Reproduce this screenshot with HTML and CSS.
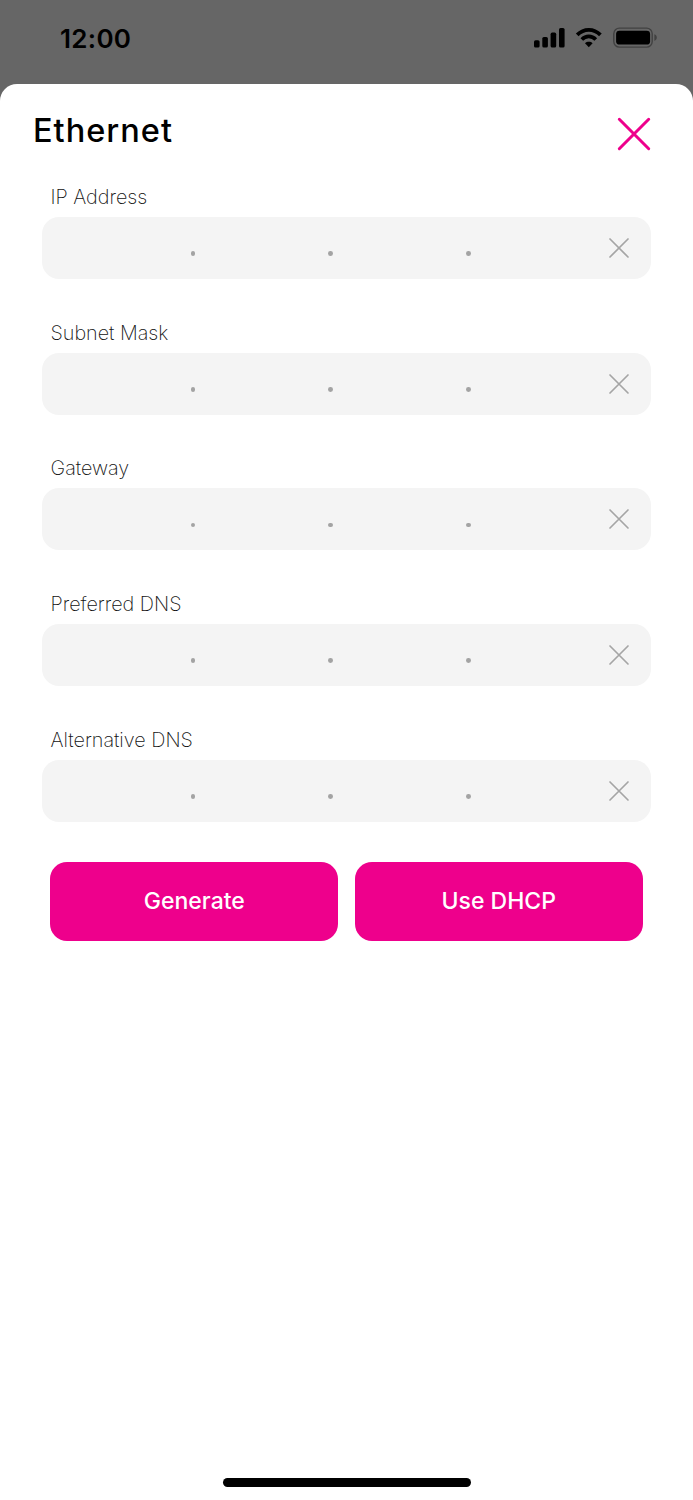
FILE: index.html
```
<!DOCTYPE html>
<html lang="en">
<head>
<meta charset="utf-8">
<title>Ethernet</title>
<link rel="stylesheet" href="styles.css">
</head>
<body>
<div class="screen">
  <header class="status">
    <span class="time">12:00</span>
    <svg class="signals" width="126" height="24" viewBox="0 0 126 24">
      <rect x="1" y="14.2" width="5.6" height="7.4" rx="1.6"/>
      <rect x="9.3" y="11" width="5.6" height="10.6" rx="1.6"/>
      <rect x="17.6" y="6.6" width="5.6" height="15" rx="1.6"/>
      <rect x="26" y="2" width="5.6" height="19.6" rx="1.6"/>
      <g fill="none" stroke="#000" stroke-width="3.7">
        <path d="M44.2 8.9C50.8 2.1 60.8 2.1 67.4 8.9"/>
        <path d="M48.8 13.5C52.8 9.4 58.8 9.4 62.8 13.5"/>
      </g>
      <path d="M52 17.2C54.2 15.3 57.4 15.3 59.6 17.2L55.8 21.2Z"/>
      <rect x="80.8" y="2.1" width="38.4" height="19" rx="5.6" fill="none" stroke="#414141" stroke-width="1.4"/>
      <rect x="83.1" y="4.7" width="34" height="13.9" rx="3.4"/>
      <path d="M121.4 8.3C124.6 9.4 124.6 13.8 121.4 15Z" fill="#414141"/>
    </svg>
  </header>
  <main class="sheet">
    <div class="heading">
      <h1 class="title">Ethernet</h1>
      <svg class="close" width="36" height="36" viewBox="0 0 36 36"><path d="M3.3 3.3L32.7 32.7M32.7 3.3L3.3 32.7"/></svg>
    </div>
    <div class="fields">
      <section class="field">
        <div class="label ip"><span>IP Address</span></div>
        <div class="input"><i class="dot"></i><i class="dot"></i><i class="dot"></i><svg class="clear" width="22" height="22" viewBox="0 0 22 22"><path d="M2 2L20 20M20 2L2 20"/></svg></div>
      </section>
      <section class="field">
        <div class="label mask"><span>Subnet Mask</span></div>
        <div class="input"><i class="dot"></i><i class="dot"></i><i class="dot"></i><svg class="clear" width="22" height="22" viewBox="0 0 22 22"><path d="M2 2L20 20M20 2L2 20"/></svg></div>
      </section>
      <section class="field">
        <div class="label gateway"><span>Gateway</span></div>
        <div class="input"><i class="dot"></i><i class="dot"></i><i class="dot"></i><svg class="clear" width="22" height="22" viewBox="0 0 22 22"><path d="M2 2L20 20M20 2L2 20"/></svg></div>
      </section>
      <section class="field">
        <div class="label preferred"><span>Preferred DNS</span></div>
        <div class="input"><i class="dot"></i><i class="dot"></i><i class="dot"></i><svg class="clear" width="22" height="22" viewBox="0 0 22 22"><path d="M2 2L20 20M20 2L2 20"/></svg></div>
      </section>
      <section class="field">
        <div class="label alternative"><span>Alternative DNS</span></div>
        <div class="input"><i class="dot"></i><i class="dot"></i><i class="dot"></i><svg class="clear" width="22" height="22" viewBox="0 0 22 22"><path d="M2 2L20 20M20 2L2 20"/></svg></div>
      </section>
    </div>
    <div class="actions">
      <button class="button generate">Generate</button>
      <button class="button dhcp">Use DHCP</button>
    </div>
    <div class="home"></div>
  </main>
</div>
</body>
</html>
```
FILE: styles.css
```
* { box-sizing: border-box; }
body { margin: 0; font-family: Inter, "Liberation Sans", sans-serif; background: #666; color: #000; }
.screen { width: 693px; height: 1500px; display: flex; flex-direction: column; overflow: hidden; background: #666; }
.status { height: 83.5px; flex: none; display: flex; justify-content: space-between; align-items: flex-start; padding: 26px 34px 0 60px; }
.time { font-size: 26px; line-height: 25px; font-weight: 600; letter-spacing: 0.3px; }
.signals { display: block; }
.sheet { flex: 1; background: #fff; border-radius: 17px 17px 0 0; display: flex; flex-direction: column; }
.heading { height: 98.2px; flex: none; display: flex; justify-content: space-between; align-items: flex-start; padding: 27px 41px 0 33px; }
.title { margin: 0; font-size: 32.5px; line-height: 40px; font-weight: 500; letter-spacing: 1px; white-space: nowrap; }
.close { margin-top: 5.5px; fill: none; stroke: #ee008c; stroke-width: 3; stroke-linecap: round; }
.fields { display: flex; flex-direction: column; padding: 0 42px; }
.field { height: 135.6px; padding-top: 3.6px; }
.label { height: 32px; padding-left: 8.5px; font-size: 19.8px; line-height: 24px; font-weight: 200; color: #111; white-space: nowrap; }
.input { height: 62px; border-radius: 17px; background: #f4f4f4; display: grid; grid-template-columns: 148.7px 137.7px 137.9px 140.8px 22px; align-items: center; }
.dot { grid-row: 1; width: 4.8px; height: 4.8px; border-radius: 50%; background: #a3a3a3; margin-top: 11px; }
.dot:nth-child(1) { grid-column: 2; }
.dot:nth-child(2) { grid-column: 3; }
.dot:nth-child(3) { grid-column: 4; }
.clear { grid-row: 1; grid-column: 5; margin-left: 1px; fill: none; stroke: #a5a5a5; stroke-width: 1.7; stroke-linecap: round; }
.actions { display: flex; gap: 16.6px; padding: 2.3px 50.4px 0; }
.button { flex: 1; height: 79px; border: 0; border-radius: 17px; background: #ee008c; color: #fff; font-family: inherit; font-size: 23px; font-weight: 500; line-height: 28px; padding: 0; white-space: nowrap; }
.home { width: 248px; height: 8.5px; border-radius: 5px; background: #000; margin: auto auto 13.5px; }
```
